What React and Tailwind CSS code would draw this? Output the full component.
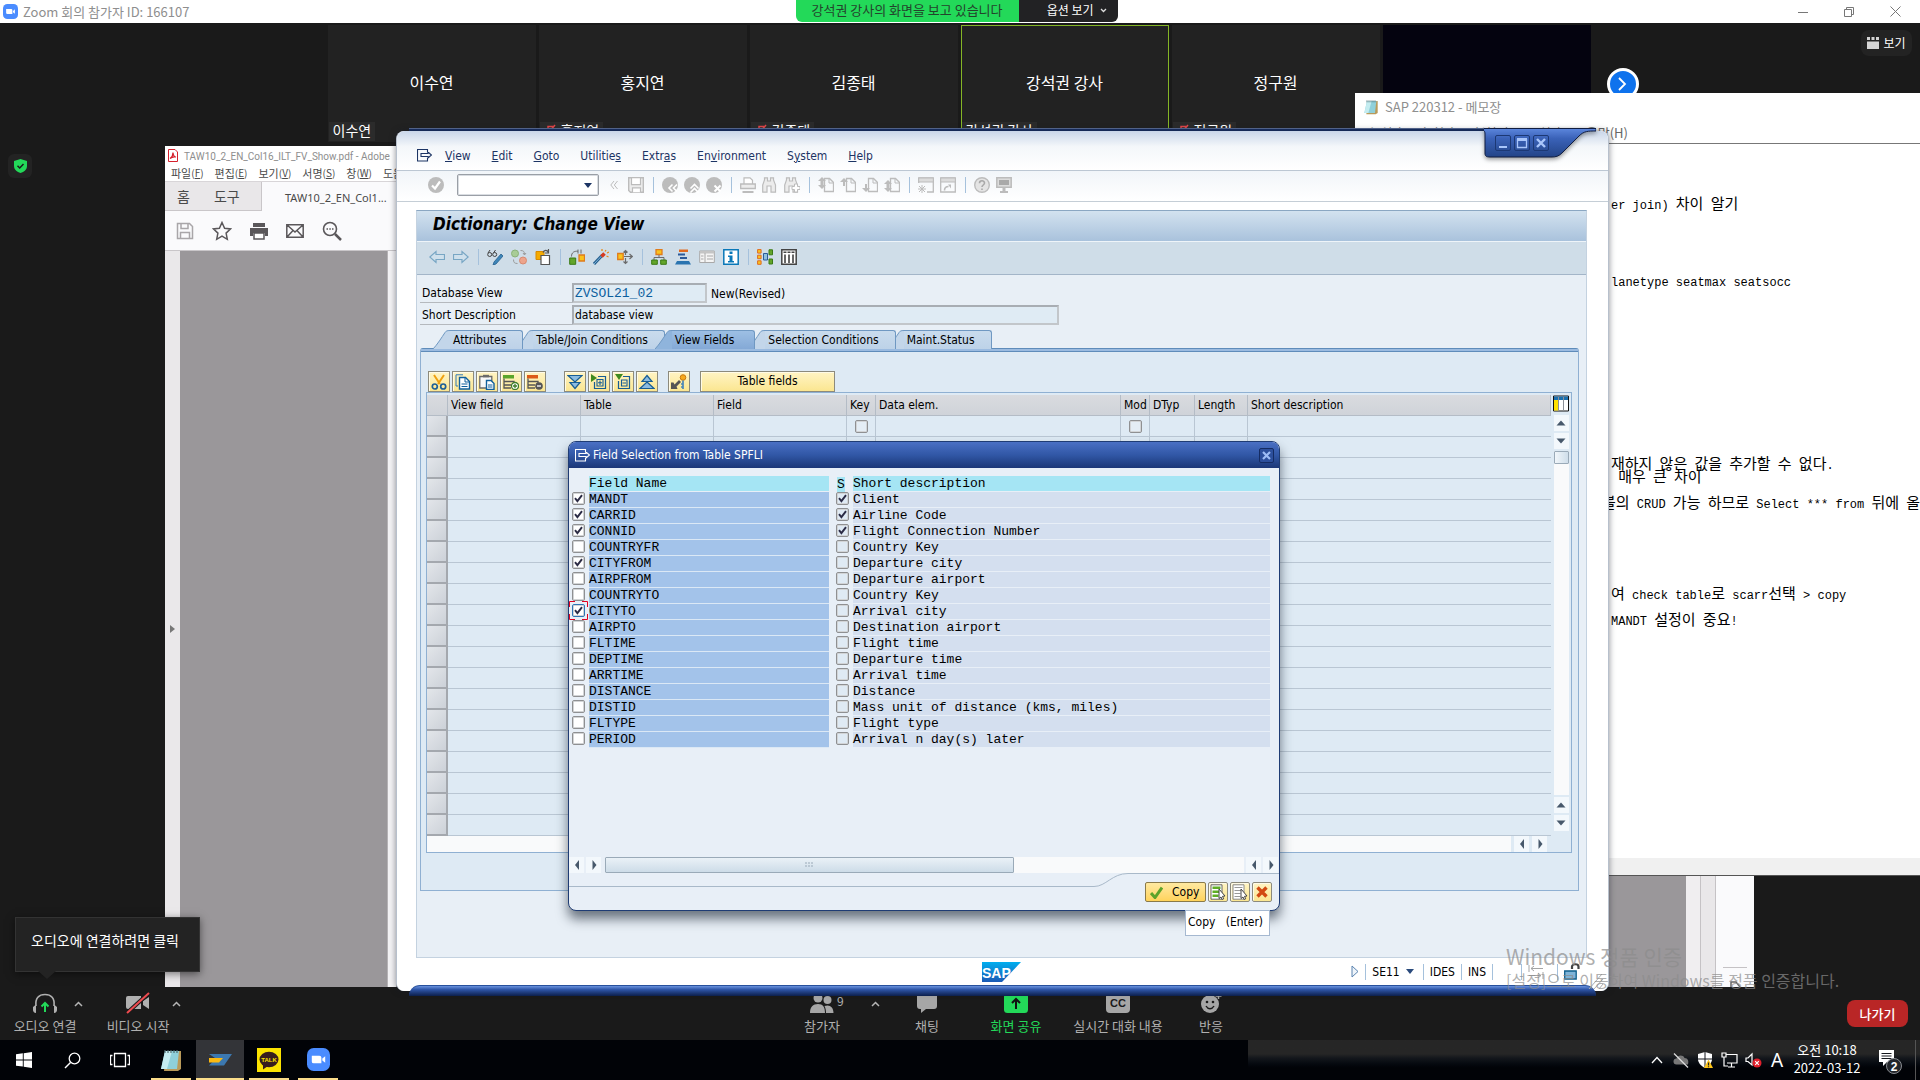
import React from 'react';

const KR = "font-['Noto_Sans_CJK_KR','Liberation_Sans',sans-serif]";
const SAPF = "font-['DejaVu_Sans_Condensed','Noto_Sans_CJK_KR',sans-serif]";
const MONO = "font-['Liberation_Mono','Noto_Sans_CJK_KR',monospace]";

/* ---------- shared pieces ---------- */

function Ic({ w = 16, h = 16, vb, children, className = '' }) {
  return (
    <svg width={w} height={h} viewBox={vb || `0 0 ${w} ${h}`} fill="none" className={`shrink-0 ${className}`} aria-hidden="true">
      {children}
    </svg>
  );
}

function Tick({ label, checked = false, tone = 'bg-white', focus = false }) {
  return (
    <span className="relative block size-[13px]">
      <input
        type="checkbox"
        aria-label={label}
        defaultChecked={checked}
        className={`peer block size-[13px] appearance-none rounded-[2px] border shadow-[inset_0_0_0_1px_#d2d4d6] ${focus ? 'border-[#2f74b5]' : 'border-[#8f9092]'} ${tone}`}
      />
      <svg width="13" height="13" viewBox="0 0 13 13" fill="none" className="pointer-events-none absolute inset-0 hidden peer-checked:block">
        <path d="M3 6.2l2.4 3L10 3.2" stroke="#2b2b45" strokeWidth="1.9" />
      </svg>
      {focus && (
        <svg width="19" height="19" viewBox="0 0 19 19" fill="none" className="pointer-events-none absolute -top-[3px] -left-[3px]">
          <path d="M.5 6V.5H6M13 .5h5.500V6M18.500 13v5.500H13M6 18.500H.5V13" stroke="#e00020" />
        </svg>
      )}
    </span>
  );
}

function Arrow({ dir, label, className = '' }) {
  const d = {
    up: 'M7 4.500l4.500 5h-9z',
    down: 'M7 9.500l4.500-5h-9z',
    left: 'M5 7l4-5v10z',
    right: 'M9.500 7l-4-5v10z',
  }[dir];
  return (
    <button aria-label={label} className={`flex h-4 w-[15px] shrink-0 items-center justify-center bg-[#f3f8fc] ${className}`}>
      <Ic w={14} h={14}><path d={d} fill="#47586b" /></Ic>
    </button>
  );
}

function Caret({ label }) {
  return (
    <button aria-label={label} className="flex h-4 w-3 items-center justify-center">
      <Ic w={9} h={6}><path d="M1 5l3.500-3.500L8 5" stroke="#b5b5b5" strokeWidth="1.500" /></Ic>
    </button>
  );
}

const CamIcon = ({ s }) => (
  <Ic w={s} h={s} vb="0 0 24 24">
    <rect width="24" height="24" rx="7" fill="#4a8cff" />
    <path d="M5 8h8a2 2 0 012 2v6H7a2 2 0 01-2-2zM16 11l3-2.500v7L16 13z" fill="#fff" />
  </Ic>
);

const NoteIcon = ({ s }) => (
  <Ic w={s} h={s} vb="0 0 24 24">
    <path d="M7 3h15v18l-3 2H5z" fill="#b99a5a" />
    <path d="M6 3h14l-2 18H2z" fill="#8fd0da" />
    <path d="M6 3h7L8 21H2z" fill="#c4ecf0" />
    <path d="M6 2v3M9 2v3M12 2v3M15 2v3M18 2v3" stroke="#4d6b70" strokeWidth="1.200" />
  </Ic>
);

/* ---------- meeting window ---------- */

const people = [
  { name: '이수연', mic: false },
  { name: '홍지연', mic: true },
  { name: '김종태', mic: true },
  { name: '강석권 강사', mic: false, active: true },
  { name: '정구원', mic: true },
];

function MeetingTitle() {
  return (
    <header className="grid h-[23px] shrink-0 grid-cols-[1fr_auto_1fr] bg-white">
      <div className="flex items-center gap-[5px] pl-[3px] text-[13px] text-[#8e8e8e]">
        <CamIcon s={15} />
        <span className="leading-5">Zoom 회의 참가자 ID: 166107</span>
      </div>
      <div className="mr-[7px] flex h-[22px] overflow-hidden rounded-b-md text-[13px]">
        <span className="flex w-[223px] items-center justify-center bg-[#23d959] pb-0.5 text-[#24432c]">강석권 강사의 화면을 보고 있습니다</span>
        <button className="flex w-[99px] items-center justify-end gap-1.5 bg-[#222224] pr-[11px] pb-0.5 text-[12px] text-white">
          옵션 보기
          <Ic w={7} h={5}><path d="M1 1l2.500 2.500L6 1" stroke="#ddd" strokeWidth="1.300" /></Ic>
        </button>
      </div>
      <div className="flex items-center justify-end pr-0.5">
        <button aria-label="최소화" className="flex h-5 w-[46px] items-center justify-center"><Ic w={10} h={10}><path d="M0 5.500h10" stroke="#777" /></Ic></button>
        <button aria-label="이전 크기로" className="flex h-5 w-[46px] items-center justify-center"><Ic w={10} h={10}><path d="M.5 2.500h7v7h-7zM2.500 2.500v-2h7v7h-2" stroke="#777" /></Ic></button>
        <button aria-label="닫기" className="flex h-5 w-[46px] items-center justify-center"><Ic w={11} h={11}><path d="M.5.5l10 10M10.500.5l-10 10" stroke="#777" /></Ic></button>
      </div>
    </header>
  );
}

function Gallery() {
  return (
    <div className="grid grid-cols-[1fr_auto_1fr] pt-0.5">
      <div className="pt-[129px] pl-2">
        <button aria-label="회의 정보" className="flex size-6 items-center justify-center rounded-md bg-[#232323]">
          <Ic w={13} h={14}>
            <path d="M6.500 0l6.500 2v5c0 3.500-3 6-6.500 7C3 13 0 10.500 0 7V2z" fill="#23d959" />
            <path d="M3.500 6.800l2.200 2.200 3.800-4" stroke="#1a1a1a" strokeWidth="1.500" />
          </Ic>
        </button>
      </div>
      <div className="mr-0.5 flex gap-[3px]">
        {people.map((p) => (
          <div key={p.name} className={`relative flex h-[117px] w-[208px] items-start justify-center border bg-[#222] pt-[44px] ${p.active ? 'border-[#84b526]' : 'border-[#222]'}`}>
            <span className="text-[16px] leading-6 text-white">{p.name}</span>
            <span className="absolute bottom-0 left-0 flex h-[19px] items-center gap-1 bg-[#2b2b2b] px-1 pb-0.5 text-[14px] leading-[17px] text-white">
              {p.mic && <Ic w={13} h={13}><path d="M4 2.500h4.500v5H4zM6.500 8v4M11 1L2 12" stroke="#e0464a" strokeWidth="1.500" /></Ic>}
              {p.name}
            </span>
          </div>
        ))}
        <div className="h-[117px] w-[208px] bg-[#04030f]" />
      </div>
      <div className="flex items-start justify-between">
        <button aria-label="다음" className="mt-[43px] ml-[14px] flex size-8 items-center justify-center rounded-full border-[3px] border-white bg-[#0e72ed]">
          <Ic w={9} h={14}><path d="M1 1l6 6-6 6" stroke="#fff" strokeWidth="1.800" /></Ic>
        </button>
        <button className="mt-[5px] mr-2 flex h-[26px] w-[51px] items-center justify-center gap-1 rounded-lg bg-[#232323] text-[12px] text-white">
          <Ic w={12} h={12}><path d="M0 0h3v3H0zM4.500 0h3v3h-3zM9 0h3v3H9zM0 4.500h12V12H0z" fill="#d5d5d5" /></Ic>
          <span className="leading-4">보기</span>
        </button>
      </div>
    </div>
  );
}

function Tool({ label, width, green, badge, children }) {
  return (
    <button className={`relative flex flex-col items-center gap-1 ${width} ${green ? 'text-[#23d959]' : 'text-[#b0b0b0]'}`}>
      <span className="flex h-[22px] items-center">{children}</span>
      {badge && <span className="absolute top-[3px] left-[49px] text-[12px] leading-3">{badge}</span>}
      <span className="text-[13px] leading-4">{label}</span>
    </button>
  );
}

function MeetingTools() {
  return (
    <footer className="flex h-[53px] shrink-0 items-start bg-[#1a1a1a] pt-[5px]">
      <div className="flex w-[206px] pl-3">
        <Tool label="오디오 연결" width="w-[66px]">
          <Ic w={24} h={20}>
            <path d="M3 13C2 5 6 1.500 12 1.500S22 5 21 13" stroke="#b0b0b0" strokeWidth="1.600" />
            <path d="M0 14l3-2.500V20C1 20 0 18 0 17zM24 14l-3-2.500V20c2 0 3-2 3-3z" fill="#b0b0b0" />
            <path d="M12 19v-8M8.500 13.500L12 10l3.500 3.500" stroke="#23d959" strokeWidth="2" />
          </Ic>
        </Tool>
        <div className="-ml-1.5 pt-1"><Caret label="오디오 옵션" /></div>
        <div className="ml-5">
          <Tool label="비디오 시작" width="w-[68px]">
            <Ic w={26} h={22}>
              <path d="M1 6a2 2 0 012-2h13v13H3a2 2 0 01-2-2zM18 9l6-4v12l-6-4z" fill="#b0b0b0" />
              <path d="M2 21L24 1" stroke="#1a1a1a" strokeWidth="4" />
              <path d="M2 21L24 1" stroke="#ee4b4f" strokeWidth="2" />
            </Ic>
          </Tool>
        </div>
        <div className="-ml-0.5 pt-1"><Caret label="비디오 옵션" /></div>
      </div>
      <div className="flex flex-1 justify-center">
        <Tool label="참가자" width="w-[68px]" badge="9">
          <Ic w={26} h={20}>
            <circle cx="9" cy="5" r="4.500" fill="#a6a6a6" />
            <circle cx="18.500" cy="7" r="4" fill="#a6a6a6" />
            <path d="M1 20c0-6 3-9 8-9s7 3 7 9zM17 20c0-3-.5-5-1.500-7 5-2 9 1 9 7z" fill="#a6a6a6" />
          </Ic>
        </Tool>
        <div className="flex w-[38px] justify-center pt-1"><Caret label="참가자 옵션" /></div>
        <Tool label="채팅" width="w-[66px]">
          <Ic w={20} h={20}><path d="M3 0h14a3 3 0 013 3v10a3 3 0 01-3 3H9l-5 4v-4H3a3 3 0 01-3-3V3a3 3 0 013-3z" fill="#a6a6a6" /></Ic>
        </Tool>
        <Tool label="화면 공유" width="w-[112px]" green>
          <Ic w={24} h={20}>
            <rect width="24" height="20" rx="3.500" fill="#23d959" />
            <path d="M12 16V6.500M8 10l4-4 4 4" stroke="#111" strokeWidth="2" />
          </Ic>
        </Tool>
        <Tool label="실시간 대화 내용" width="w-[92px]">
          <span className="flex h-5 w-6 items-center justify-center rounded-[4px] bg-[#a6a6a6] font-['Liberation_Sans',sans-serif] text-[11px] font-bold text-[#1a1a1a]">CC</span>
        </Tool>
        <Tool label="반응" width="w-[94px]">
          <Ic w={22} h={20}>
            <circle cx="10" cy="11" r="9" fill="#a6a6a6" />
            <circle cx="7" cy="9" r="1.300" fill="#1a1a1a" /><circle cx="13" cy="9" r="1.300" fill="#1a1a1a" />
            <path d="M6 13c2 3.500 6 3.500 8 0" stroke="#1a1a1a" strokeWidth="1.500" />
            <path d="M18.500 0v6M15.500 3h6" stroke="#a6a6a6" strokeWidth="1.500" />
          </Ic>
        </Tool>
      </div>
      <div className="flex w-20 justify-end pt-2 pr-3">
        <button className="h-[27px] w-[61px] rounded-lg bg-[#b92626] text-[13px] leading-[24px] font-medium text-white">나가기</button>
      </div>
    </footer>
  );
}

/* ---------- PDF reader ---------- */

function PdfWindow() {
  return (
    <section className="absolute top-[146px] right-[166px] bottom-[93px] left-[165px] flex flex-col bg-white text-[#4a4a4a]">
      <div className="flex h-[18px] shrink-0 items-center gap-1.5 pl-[3px] text-[#8e8e8e]">
        <Ic w={10} h={13}>
          <path d="M.5.5h6.500l2.500 2.500v9.500h-9z" fill="#fff" stroke="#d5202c" />
          <path d="M2 9.500c1.500-1 3-3 3-6 .3 3 1.500 4.500 3 4.500-2.500-.5-4.500.2-6 1.500z" stroke="#d5202c" strokeWidth="1.200" />
        </Ic>
        <span className="pt-0.5 font-['Roboto',sans-serif] text-[10px] whitespace-nowrap">TAW10_2_EN_Col16_ILT_FV_Show.pdf - Adobe</span>
      </div>
      <nav className="flex h-[17px] shrink-0 items-center gap-[11px] pl-1.5 text-[11px] leading-4 whitespace-nowrap">
        {[['파일', 'F'], ['편집', 'E'], ['보기', 'V'], ['서명', 'S'], ['창', 'W'], ['도움말', 'H']].map(([t, k]) => (
          <a key={k} href="#menu" className="flex items-center">{t}<span className="text-[10px]">(<u>{k}</u>)</span></a>
        ))}
      </nav>
      <div className="flex h-[30px] shrink-0 border-t border-[#d8d5d8] bg-[#fafafc] text-[14px]">
        <div className="flex w-[97px] items-center gap-6 border-r border-b border-[#c9c6c9] bg-[#e9e7e9] pl-3">
          <a href="#home" className="leading-4">홈</a>
          <a href="#tools" className="leading-4">도구</a>
        </div>
        <span className="pt-[8px] pl-[23px] font-['Noto_Sans',sans-serif] text-[11px] leading-4">TAW10_2_EN_Col1...</span>
      </div>
      <div className="flex h-[40px] shrink-0 items-center gap-[18px] border-b border-[#c9c6c9] bg-[#fafafc] pl-[11px]">
        <button aria-label="저장"><Ic w={18} h={18}><path d="M1.500 1.500h12l3 3v12h-15zM5 1.500v5h7v-5M4.500 16.500v-6h9v6" stroke="#a9a6a9" strokeWidth="1.500" /></Ic></button>
        <button aria-label="즐겨찾기"><Ic w={20} h={20}><path d="M10 1.500l2.600 5.700 6 .7-4.500 4.200 1.200 6.200L10 15.200l-5.300 3.100 1.200-6.200L1.400 7.900l6-.7z" stroke="#5a575a" strokeWidth="1.500" /></Ic></button>
        <button aria-label="인쇄"><Ic w={18} h={18}><path d="M3 1h12v4H3zM0 6h18v8h-3v-3H3v3H0z" fill="#5a575a" /><path d="M4 11h10v6H4z" fill="#fff" stroke="#5a575a" strokeWidth="1.500" /></Ic></button>
        <button aria-label="메일"><Ic w={18} h={14}><path d="M.8.8h16.400v12.400H.8zM.8.8L9 8l8.200-7.200M.8 13.200l6-6.500M17.200 13.200l-6-6.500" stroke="#5a575a" strokeWidth="1.500" /></Ic></button>
        <button aria-label="찾기"><Ic w={20} h={20}><circle cx="8" cy="8" r="6.500" stroke="#5a575a" strokeWidth="1.600" /><path d="M13 13l6 6" stroke="#5a575a" strokeWidth="2.500" /><path d="M4.500 8h1.500M7.300 8h1.500M10 8h1.500" stroke="#5a575a" strokeWidth="1.500" /></Ic></button>
      </div>
      <div className="flex flex-1">
        <div className="flex w-[15px] items-center justify-center bg-[#eae8ea] pt-5"><Ic w={5} h={8}><path d="M0 0l5 4-5 4z" fill="#777" /></Ic></div>
        <div className="w-[207px] bg-[#9a979a]" />
        <div className="w-[9px] border-l border-[#b5b2b5] bg-[#f4f3f5]" />
        <div className="flex-1 bg-[#9a979a]" />
        <div className="w-[15px] border-r border-[#c5c2c5] bg-[#f0eef0]" />
        <div className="w-[15px] border-r border-[#c5c2c5] bg-[#e9e7e9]" />
        <div className="flex w-[38px] flex-col items-center justify-end gap-3 bg-[#fafafc]">
          <span className="h-px w-6 bg-[#c5c2c5]" />
          <Ic w={14} h={7}><path d="M3 7V2h5l4 5" stroke="#666" strokeWidth="1.500" /></Ic>
        </div>
      </div>
    </section>
  );
}

/* ---------- Notepad ---------- */

const noteLines = [
  '', '', '', '', 'er join) 차이 알기', '', '', '', '', '', 'lanetype seatmax seatsocc',
  '', '', '', '', '', '', '', '', '', '', '', '', '',
  '재하지 않은 값을 추가할 수 없다.', ' 매우 큰 차이', '', '>의 CRUD 가능 하므로 Select *** from 뒤에 올', '', '', '', '', '', '',
  '여 check table로 scarr선택 > copy', '', 'MANDT 설정이 중요!',
];

function NoteLine({ text }) {
  const cut = text.startsWith('>');
  const body = cut ? '블' + text.slice(1) : text;
  return (
    <p className={`h-[13px] leading-[13px] whitespace-pre ${cut ? 'pl-[247px]' : 'pl-64'}`}>
      {body.split(/([가-힣]+)/).map((s, i) => (/[가-힣]/.test(s) ? <span key={i} className="text-[15px]">{s}</span> : s))}
    </p>
  );
}

function Notepad() {
  return (
    <section className="absolute top-[93px] right-0 bottom-[204px] left-[1355px] flex flex-col overflow-hidden border-b border-[#555] bg-white">
      <div className="flex h-[28px] shrink-0 items-center gap-1.5 pl-2 text-[13px] text-[#8e8e8e]">
        <NoteIcon s={16} />
        <span className="leading-4">SAP 220312 - 메모장</span>
      </div>
      <nav className="flex h-[23px] shrink-0 items-center gap-3 border-b border-[#777] pt-0.5 pl-2 text-[13px] leading-4 text-[#666]">
        <a href="#file">파일(F)</a><a href="#edit">편집(E)</a><a href="#format">서식(O)</a><a href="#view">보기(V)</a><a href="#help">도움말(H)</a>
      </nav>
      <div className={`flex-1 overflow-hidden pt-[3px] text-[12px] text-black ${MONO}`}>
        {noteLines.map((t, i) => <NoteLine key={i} text={t} />)}
      </div>
      <div className="h-[17px] shrink-0 bg-[#f0f0f0]" />
    </section>
  );
}

/* ---------- SAP window ---------- */

const G = '#bcbcbc';
const Sep = ({ className = 'w-[17px]' }) => (
  <span className={`flex shrink-0 justify-center ${className}`}><span className="h-4 w-px bg-[#a5c1dc]" /></span>
);

const page = (extra) => (
  <>
    <path d="M6.500 1.500h5l4 4v9h-9z" stroke={G} strokeWidth="1.300" /><path d="M11 1.500v4.500h4.500" stroke={G} />
    <path d={extra} fill={G} />
  </>
);
const bino = <path d="M2.500 3V.8h3V4h3V.8h3V3L13.500 8v7.200H9V9H5v6.200H.7V8z" fill="#ececec" stroke={G} strokeWidth="1.200" />;

const sysIcons = [
  ['Save', <><path d="M.7.7h14.600v14.600H2.500L.7 13.500z" fill="#ececec" stroke={G} strokeWidth="1.400" /><path d="M3.500.7h9v7h-9zM4.500 15.300v-4.500h8v4.500" fill="#fff" stroke={G} strokeWidth="1.200" /></>],
  null,
  ['Back', <><circle cx="8" cy="8" r="8" fill={G} /><path d="M10.500 7.500L7 11l3.500 3.500M15 7.500L11.500 11l3.500 3.500" stroke="#fff" strokeWidth="1.600" /></>],
  ['Exit', <><circle cx="8" cy="8" r="8" fill={G} /><path d="M6.500 11.500L10.500 7.500l4 4M6.500 15.500l4-4 4 4" stroke="#fff" strokeWidth="1.600" /></>],
  ['Cancel', <><circle cx="8" cy="8" r="8" fill={G} /><path d="M8.500 8.500l6 6M14.500 8.500l-6 6" stroke="#fff" strokeWidth="2" /></>],
  null,
  ['Print', <><path d="M4 7V.8h6l2.500 2.500V7" fill="#fff" stroke={G} strokeWidth="1.200" /><path d="M.7 7h14.600v4.500H.7z" fill="#ececec" stroke={G} strokeWidth="1.300" /><path d="M2.500 14h11v2h-11z" fill={G} /></>],
  ['Find', bino],
  ['Find next', <>{bino}<path d="M10.500 7h3v2.500H16v3h-2.500V15h-3v-2.500H8v-3h2.500z" fill="#fff" stroke={G} /></>],
  null,
  ['First page', page('M4 0l4 4H5.500v4H8l-4 4-4-4h2.500V4H0z')],
  ['Previous page', page('M4 1l4 4H5v4H3V5H0z')],
  ['Next page', page('M4 15l-4-4h3V7h2v4h3z')],
  ['Last page', page('M4 3l4 4H5.500v4H8l-4 4-4-4h2.500V7H0z')],
  null,
  ['New session', <><path d="M.7 6V1h14.600v14H9" stroke={G} strokeWidth="1.300" /><path d="M.7 1h14.600v4H.7z" fill="#dcdcdc" stroke={G} /><path d="M4 8v8M0 12h8M1 9l6 6M7 9l-6 6" stroke={G} /></>],
  ['Shortcut', <><path d="M.7 1h14.600v14H.7z" stroke={G} strokeWidth="1.300" /><path d="M.7 1h14.600v4H.7z" fill="#dcdcdc" stroke={G} /><path d="M4.500 13.500c0-3 1.500-4 4-4" stroke={G} strokeWidth="1.600" /><path d="M8 7.500h3v4z" fill={G} /></>],
  null,
  ['Help', <><circle cx="8" cy="8" r="7.300" fill="#e4e4e4" stroke={G} strokeWidth="1.400" /><path d="M5.500 6.200C5.500 3 10.500 3 10.500 6c0 2-2.500 2-2.500 4M8 11.500v1.500" stroke="#a9a9a9" strokeWidth="1.600" /></>],
  ['Layout', <><path d="M.8.8h14.400v9.400H.8z" fill="#dcdcdc" stroke={G} strokeWidth="1.500" /><path d="M3 3h10v5H3z" fill="#a9a9a9" /><path d="M6.500 10.500h3V14h2.500v2H4v-2h2.500z" fill={G} /></>],
];

const GR = '#6b6b6b';
const appIcons = [
  ['Back', <path d="M7 2.500v3h8.500v5H7v3L.8 8z" fill="#cfe0ec" stroke="#78a6c4" strokeWidth="1.200" />],
  ['Forward', <path d="M9 2.500v3H.5v5H9v3L15.200 8z" fill="#cfe0ec" stroke="#78a6c4" strokeWidth="1.200" />],
  null,
  ['Display / Change', <><circle cx="2.700" cy="5.500" r="2" stroke="#444" /><circle cx="7.700" cy="5.500" r="2" stroke="#444" /><path d="M1 4l2-3M6.500 4l2-3" stroke="#444" /><path d="M14 5l2 2-7 8-3 1 1-3z" fill="#3f86b8" stroke="#27618f" strokeWidth=".8" /></>],
  ['Active / Inactive', <><circle cx="4" cy="4.500" r="3.500" fill="#a8cc96" stroke="#8ab278" /><circle cx="12" cy="11.500" r="3.500" fill="#eda48c" stroke="#d88a70" /><path d="M9.500 1.500c3 0 4 1 4 4M12 4l1.500 2L15 4M6.500 14.500c-3 0-4-1-4-4" stroke="#9a9a9a" /></>],
  ['Other object', <><path d="M1 2.500h8v8H1z" fill="#f5ab00" stroke="#d98a00" /><path d="M6 6.500h8.500v9H6z" fill="#fff" stroke="#555" strokeWidth="1.200" /><path d="M8 3.500C9 .8 12 .5 13.500 3.500M13.500 0v4H10" stroke="#555" strokeWidth="1.200" /></>],
  null,
  ['Check', <><path d="M.7 9h6v6.300h-6z" fill="#63a52b" stroke="#3b7a15" /><path d="M10 6h5.500v6H10z" fill="#f9c31d" stroke="#e07c1c" strokeWidth="1.300" /><path d="M2.500 7.500C2.500 3.500 5 2 9 2.200M9 .5v4M12 4.500V.5" stroke={GR} /></>],
  ['Activate', <><path d="M1 15L9.500 6" stroke="#27618f" strokeWidth="3" /><path d="M1 15L9.500 6" stroke="#7fb4dc" strokeWidth="1" /><path d="M8.500 7.500l3-3" stroke="#d63a20" strokeWidth="3.500" /><path d="M9 2V0M13 1l-1 1.500M14 4l2-1M13.500 7l2 1" stroke="#e88a1a" strokeWidth="1.300" /></>],
  ['Where-used', <><path d="M.7 4.500h5.500v6H.7z" fill="#f9c31d" stroke="#e07c1c" strokeWidth="1.300" /><path d="M7 7.500h8M12.500 5l2.800 2.500-2.800 2.500M8.500 6V1.500M6.500 3.500l2-2 2 2M8.500 9v5.500M6.500 12.500l2 2 2-2" stroke={GR} strokeWidth="1.200" /></>],
  null,
  ['Hierarchy', <><path d="M5 .7h6v4.800H5z" fill="#f9c31d" stroke="#e07c1c" strokeWidth="1.300" /><path d="M8 6v3M3 11V8.500h10V11" stroke={GR} /><path d="M.7 11h5.600v4.300H.7zM9.700 11h5.600v4.300H9.700z" fill="#63a52b" stroke="#3b7a15" /></>],
  ['Object list', <><path d="M4 .5h9v2.500H4z" fill="#e06a20" /><path d="M3 4.500h7v2H3zM5 8h7v2H5z" fill="#2b5a9a" /><path d="M2 12h12l2 3.500H0z" fill="#2a74b0" /></>],
  ['Contents', <><path d="M.7 2h14.600v11.500H.7z" fill="#f4f4f4" stroke="#a8a8a8" /><path d="M.7 2h14.600v2.500H.7z" fill="#c4c4c4" /><path d="M6 4v9M2 7h2.500M2 10h2.500M8 7h6M8 10h6" stroke="#a8a8a8" /></>],
  ['Information', <><path d="M.8.8h14.400v14.400H.8z" fill="#fff" stroke="#0a78b8" strokeWidth="1.500" /><path d="M6.500 2.500h3V5h-3zM5 6.500h4.500V12H11v1.500H5V12h1.500V8H5z" fill="#0a78b8" /></>],
  null,
  ['Relationships', <><path d="M.6.6h3.500v3.500H.6zM.6 6.200h3.500v3.500H.6zM.6 11.800h3.500v3.500H.6z" fill="#f9c31d" stroke="#e06a20" /><path d="M6.500 4.500h4v6.500h-4z" fill="#8fc0e0" stroke="#2b5a9a" /><path d="M12 .8h3.500v5H12zM12 10h3.500v5H12z" fill="#63a52b" stroke="#3b7a15" /></>],
  ['Columns', <><path d="M.8.8h14.400v14.400H.8z" fill="#fff" stroke="#444" strokeWidth="1.500" /><path d="M2.500 2.500h3v1.500h-3zM6.500 2.500h3v1.500h-3zM10.500 2.500h3v1.500h-3z" fill="#444" /><path d="M3 5.500h2V14H3zM7 5.500h2V14H7zM11 5.500h2V14h-2z" fill="#666" /></>],
];

const docs = <path d="M1 .8h7M1 .8V12h2" stroke="#2f78b8" />;
const gridIcons = [
  ['Cut', <><path d="M3 1l6 9M13 1L7 10" stroke="#eea010" strokeWidth="2" /><circle cx="3.800" cy="12.500" r="2.500" stroke="#1d5f96" strokeWidth="1.700" /><circle cx="12.200" cy="12.500" r="2.500" stroke="#1d5f96" strokeWidth="1.700" /></>],
  ['Copy', <>{docs}<path d="M4.500 3.500h6l4 4v7.500h-10z" fill="#fff" stroke="#0f5f9c" strokeWidth="1.400" /><path d="M10 3.500V8h4.500M6.500 10h6M6.500 12.500h6" stroke="#0f5f9c" /></>],
  ['Paste', <><path d="M.8 2.500h12V14H.8z" fill="#f8f8f8" stroke="#6a6a6a" strokeWidth="1.300" /><path d="M4 .8h6v2.500H4z" fill="#6a6a6a" /><path d="M7.500 6.500h4.500l3 3v6H7.500z" fill="#fff" stroke="#0f5f9c" strokeWidth="1.400" /><path d="M9 11h4.500M9 13h4.500" stroke="#0f5f9c" /></>],
  ['Insert row', <><path d="M0 1h11v3.500H0z" fill="#5ba52b" /><path d="M1 4.500V14h7M1 7.500h10V10M1 11h7" stroke="#555" strokeWidth="1.300" /><circle cx="12" cy="12" r="3.500" fill="#fff" stroke="#3f7d2a" strokeWidth="1.300" /><path d="M12 10v4M10 12h4" stroke="#3f7d2a" strokeWidth="1.300" /></>],
  ['Delete row', <><path d="M0 1h11v3.500H0z" fill="#dc5a18" /><path d="M1 4.500V14h7M1 7.500h10V10M1 11h7" stroke="#555" strokeWidth="1.300" /><circle cx="12" cy="12" r="3.800" fill="#555" /><path d="M10 12h4" stroke="#fff" strokeWidth="1.300" /></>],
  'w-4',
  ['Sort down', <path d="M1 1.500h14L8 8zM3 8.500h10L8 14.500z" fill="#8cbce0" stroke="#175d94" strokeWidth="1.200" />],
  ['Expand', <><path d="M0 0l6 4-6 4z" fill="#3f8a1f" /><path d="M7 2.500h7.500v12h-11V8" stroke="#175d94" strokeWidth="1.200" /><path d="M6 5.500h6v6.500H6zM9 6.500v4.500M7 8.700h4" stroke="#175d94" strokeWidth="1.100" /></>],
  ['Collapse', <><path d="M0 0h8L4 6z" fill="#3f8a1f" /><path d="M8 2.500h6.500v12h-11V7" stroke="#175d94" strokeWidth="1.200" /><path d="M6.500 6h5.500v6H6.500zM7.500 9h3.500" stroke="#175d94" strokeWidth="1.100" /></>],
  ['Sort up', <path d="M8 1.500l5 6H3zM8 8l7 6.500H1z" fill="#8cbce0" stroke="#175d94" strokeWidth="1.200" />],
  'w-2',
  ['Key', <><path d="M0 15V8.500h2.500l1 2L8 6l2 2-4.500 4.500 1 2.500z" fill="#555" /><circle cx="12" cy="3.500" r="2.800" fill="#f5a81c" stroke="#c8780c" /><path d="M12 6.500V15M12 10h-2M12 13h-2" stroke="#4a86b8" strokeWidth="1.700" /></>],
];

const YB = 'border border-[#8c8a7c] bg-linear-to-b from-[#fff4c4] to-[#fbe690] shadow-[inset_1px_1px_0_#fffbe6]';

function IconRow({ icons, cell, sep }) {
  return icons.map((it, i) =>
    it ? (
      <button key={i} aria-label={it[0]} title={it[0]} className={`flex h-5 shrink-0 items-center justify-center ${cell}`}>
        <Ic>{it[1]}</Ic>
      </button>
    ) : <Sep key={i} className={sep} />
  );
}

const menus = [
  ['', 'V', 'iew'], ['', 'E', 'dit'], ['', 'G', 'oto'], ['Utilitie', 's', ''], ['Extr', 'a', 's'],
  ['En', 'v', 'ironment'], ['S', 'y', 'stem'], ['', 'H', 'elp'],
];

function MenuDoor({ stroke }) {
  return <Ic w={15} h={13}><path d="M10.500 3.500v-3H.5v11.500h10V9M4 4.500h7V3l3.500 3-3.500 3V7.500H4z" stroke={stroke} strokeWidth="1.100" /></Ic>;
}

const tabs = [
  ['Attributes', 'z-30', '', 'pr-4'],
  ['Table/Join Conditions', 'z-20', '-ml-[7px]', 'pr-4'],
  ['View Fields', 'z-40', '-ml-[10px]', 'pr-5'],
  ['Selection Conditions', 'z-20', '-ml-[7px]', 'pr-4'],
  ['Maint.Status', 'z-10', '-ml-[9px]', 'pr-4'],
];

function Tab({ name, z, ml, pr }) {
  const active = name === 'View Fields';
  return (
    <button role="tab" aria-selected={active} className={`relative flex h-[19px] ${z} ${ml}`}>
      <Ic w={17} h={19}>
        <path d="M0 19C4 15 9 7 12 2.500 13 1 14 .5 17 .5V19z" fill={active ? '#8fb4dc' : '#c3d6ea'} />
        <path d="M0 19C4 15 9 7 12 2.500 13 1 14 .5 17 .5" stroke="#6f98c2" />
      </Ic>
      <span className={`h-[19px] rounded-tr-[3px] border-t border-r border-[#6f98c2] pl-[3px] leading-[19px] ${pr} ${active ? 'bg-linear-to-b from-[#9dbfe4] to-[#84a9d6]' : 'bg-linear-to-b from-[#c9dbed] to-[#bdd2e8]'}`}>{name}</span>
    </button>
  );
}

const cols = [
  ['', 'w-[21px]'], ['View field', 'w-[133px]'], ['Table', 'w-[133px]'], ['Field', 'w-[133px]'], ['Key', 'w-[29px]'],
  ['Data elem.', 'w-[245px]'], ['Mod', 'w-[29px]'], ['DTyp', 'w-[45px]'], ['Length', 'w-[53px]'], ['Short description', ''],
];

function FieldsGrid() {
  return (
    <div className="mr-1.5 mb-[37px] ml-[5px] flex flex-1 border border-[#8fb0d2] pt-0.5">
      <div className="flex flex-1 flex-col">
        <table className="w-full table-fixed border-separate border-spacing-0 text-left">
          <thead>
            <tr>
              {cols.map(([c, w], i) => (
                <th key={i} className={`h-[21px] border-r border-b border-[#b4bcc6] bg-linear-to-b from-[#d9dbdf] to-[#cfd3d9] py-0 pr-0 pl-[3px] font-normal whitespace-nowrap ${w}`}>{c}</th>
              ))}
            </tr>
          </thead>
          <tbody>
            {Array.from({ length: 20 }, (_, r) => (
              <tr key={r}>
                {cols.map(([c], i) => (
                  <td key={i} className={i === 0
                    ? 'h-[21px] border-r-2 border-b-2 border-[#a4a8ae] bg-linear-to-br from-[#e3e6ea] to-[#ccd1d8] p-0'
                    : `h-[21px] border-b border-[#b9c6d3] p-0 ${i < 9 ? 'border-r' : ''}`}>
                    {(c === 'Key' || c === 'Mod') && <span className="flex justify-center"><Tick label={`${c} ${r + 1}`} tone="bg-[#e4edf5]" /></span>}
                  </td>
                ))}
              </tr>
            ))}
          </tbody>
        </table>
        <div className="flex h-4 gap-[3px] pr-1">
          <div className="flex-1 bg-[#f9fafb]" />
          <Arrow dir="left" label="Scroll left" />
          <Arrow dir="right" label="Scroll right" />
        </div>
      </div>
      <div className="flex w-5 flex-col items-center gap-0.5 pb-[21px]">
        <button aria-label="Table settings" className="mb-px">
          <Ic w={16} h={17} vb="0 0 16 17">
            <path d="M.5 1h15v15H.5z" fill="#fff" stroke="#111" />
            <path d="M1 1.500h14V5H1z" fill="#1a6fae" /><path d="M1 5h4.500v10.500H1z" fill="#ffe100" /><path d="M5.500 2v13.500M10.500 2v13.500" stroke="#8a9098" />
          </Ic>
        </button>
        <Arrow dir="up" label="Scroll up" />
        <Arrow dir="down" label="Scroll down" />
        <div className="flex w-[15px] flex-1 bg-[#f9fafb]"><div className="h-[13px] w-full rounded-[1px] border border-[#9aaab8] bg-linear-to-r from-[#f1f6fa] to-[#cfdeea]" /></div>
        <Arrow dir="up" label="Row up" />
        <Arrow dir="down" label="Row down" />
      </div>
    </div>
  );
}

const fields = [
  ['MANDT', 'Client', 1, 1], ['CARRID', 'Airline Code', 1, 1], ['CONNID', 'Flight Connection Number', 1, 1],
  ['COUNTRYFR', 'Country Key', 0, 0], ['CITYFROM', 'Departure city', 1, 0], ['AIRPFROM', 'Departure airport', 0, 0],
  ['COUNTRYTO', 'Country Key', 0, 0], ['CITYTO', 'Arrival city', 1, 0], ['AIRPTO', 'Destination airport', 0, 0],
  ['FLTIME', 'Flight time', 0, 0], ['DEPTIME', 'Departure time', 0, 0], ['ARRTIME', 'Arrival time', 0, 0],
  ['DISTANCE', 'Distance', 0, 0], ['DISTID', 'Mass unit of distance (kms, miles)', 0, 0],
  ['FLTYPE', 'Flight type', 0, 0], ['PERIOD', 'Arrival n day(s) later', 0, 0],
];

function Dialog() {
  return (
    <section role="dialog" aria-label="Field Selection from Table SPFLI" className="absolute top-[313px] right-[329px] bottom-[85px] left-[172px] z-50 flex flex-col overflow-hidden rounded-lg border border-[#1f3c74] bg-[#e8eff7] shadow-[0_8px_12px_rgba(40,50,65,0.65)]">
      <div className="flex h-[26px] shrink-0 items-center gap-[3px] bg-linear-to-b from-[#4a70c4] via-[#3157a6] to-[#1b3777] pr-[5px] pl-1.5 text-white">
        <MenuDoor stroke="#fff" />
        <h2 className="flex-1 leading-4">Field Selection from Table SPFLI</h2>
        <button aria-label="Close" className="flex size-[15px] items-center justify-center rounded-[2px] border border-[#152c63] bg-[#2c4f9c]">
          <Ic w={9} h={9}><path d="M1 1l7 7M8 1L1 8" stroke="#9dbcf5" strokeWidth="2.200" /></Ic>
        </button>
      </div>
      <div className="min-h-0 flex-1 pt-2 pr-[9px]">
        <table className={`w-full table-fixed border-separate border-spacing-0 text-left text-[13px] leading-[15px] text-black ${MONO}`}>
          <thead>
            <tr>
              <th className="h-4 w-5 p-0" />
              <th className="h-4 w-60 border-b border-[#e8eff7] bg-[#a5e5f4] p-0 font-normal">Field Name</th>
              <th className="h-4 w-6 p-0 pl-2 font-normal"><span className="block h-[15px] w-2 bg-[#a5e5f4]">S</span></th>
              <th className="h-4 border-b border-[#e8eff7] bg-[#a5e5f4] p-0 font-normal">Short description</th>
            </tr>
          </thead>
          <tbody>
            {fields.map(([f, d, a, b]) => (
              <tr key={f}>
                <td className="h-4 p-0 pl-[3px] align-top"><Tick label={f} checked={!!a} focus={f === 'CITYTO'} /></td>
                <td className="h-4 border-b border-[#dbe8f5] bg-[#a3c3ea] p-0">{f}</td>
                <td className="h-4 p-0 pl-[7px] align-top"><Tick label={`${f} selected`} checked={!!b} tone="bg-[#dfeaf4]" /></td>
                <td className="h-4 border-b border-[#e8eff7] bg-[#d4dfef] p-0">{d}</td>
              </tr>
            ))}
          </tbody>
        </table>
      </div>
      <div className="flex h-4 shrink-0 gap-0.5 pr-px">
        <Arrow dir="left" label="Scroll left" />
        <Arrow dir="right" label="Scroll right" />
        <div className="ml-0.5 flex flex-1 bg-[#f9fafb]">
          <div className="flex w-[64%] items-center justify-center rounded-[1px] border border-[#9aaab8] bg-linear-to-b from-[#eaf1f7] to-[#cddce8]">
            <Ic w={8} h={6}><path d="M0 1h2M3 1h2M6 1h2M0 4h2M3 4h2M6 4h2" stroke="#9aaab8" /></Ic>
          </div>
        </div>
        <Arrow dir="left" label="Page left" />
        <Arrow dir="right" label="Page right" />
      </div>
      <div className="flex h-[37px] shrink-0">
        <div className="h-[14px] flex-1 border-b border-[#a9b9c9]" />
        <Ic w={34} h={14}><path d="M0 13.500C12 13.500 18 .5 34 .5" stroke="#a9b9c9" /></Ic>
        <div className="flex w-[151px] items-center justify-end gap-0.5 border-t border-[#a9b9c9] pr-[7px]">
          <button className="flex h-5 w-[61px] items-center gap-[9px] rounded-[2px] border border-[#8a7a4a] bg-linear-to-b from-[#ffe9a0] to-[#ffd35a] pl-1">
            <Ic w={13} h={13}><path d="M1 7l4 4.500L12 1.500" stroke="#5da32a" strokeWidth="3" /></Ic>Copy
          </button>
          <button aria-label="Select all" className={`flex h-5 w-5 items-center justify-center rounded-[2px] ${YB}`}>
            <Ic><path d="M1 .8h11v14.400H1z" fill="#fff" stroke="#666" /><path d="M2.500 2.500h8v2.500h-8zM2.500 6.500h8v2.500h-8zM2.500 10.500h6v2.500h-6z" fill="#5fae24" /><path d="M9 5l6 7-2.500.3 1.200 2.500-1.500.7-1.200-2.500-2 1.500z" fill="#fff" stroke="#444" /></Ic>
          </button>
          <button aria-label="Deselect all" className={`flex h-5 w-5 items-center justify-center rounded-[2px] ${YB}`}>
            <Ic><path d="M1 .8h11v14.400H1z" fill="#fff" stroke="#888" /><path d="M2.500 3.500h8M2.500 6.500h8M2.500 9.500h6M2.500 12.500h6" stroke="#999" /><path d="M9 5l6 7-2.500.3 1.200 2.500-1.500.7-1.200-2.500-2 1.500z" fill="#fff" stroke="#444" /></Ic>
          </button>
          <button aria-label="Cancel" className={`flex h-5 w-5 items-center justify-center rounded-[2px] ${YB}`}>
            <Ic w={12} h={12}><path d="M1.500 1.500l9 9M10.500 1.500l-9 9" stroke="#d24a12" strokeWidth="3.400" /></Ic>
          </button>
        </div>
      </div>
    </section>
  );
}

function SapWindow() {
  return (
    <section className={`absolute top-[128px] right-[311px] bottom-[84px] left-[396px] flex pt-[3px] pb-[5px] text-[12px] text-black ${SAPF}`}>
      <div className="absolute inset-x-[13px] top-0 h-1 border-t border-[#5a6d95] bg-[#172f66]" />
      <div className="relative flex flex-1 flex-col rounded-lg border-x border-[#b7c0cc] bg-white shadow-[0_0_6px_rgba(20,25,40,0.5)]">
        <nav className="flex h-10 shrink-0 items-center rounded-t-lg border-b border-[#bcc7d3] bg-linear-to-b from-[#c9d6e9] via-[#f4f7fa] via-40% to-white pt-2.5 pl-5 text-[#1c3464]">
          <MenuDoor stroke="#1c3464" />
          <div className="ml-[13px] flex gap-[21px] leading-4">
            {menus.map(([a, u, b]) => <a key={a + u + b} href="#menu">{a}<u>{u}</u>{b}</a>)}
          </div>
        </nav>
        <div className="flex h-[31px] shrink-0 items-center border-b border-[#c5ced6] bg-linear-to-b from-[#f1f5f9] to-white pb-0.5 pl-[31px]">
          <button aria-label="Enter"><Ic><circle cx="8" cy="8" r="8" fill={G} /><path d="M4 8.500l3 3 5-7" stroke="#fff" strokeWidth="2.200" /></Ic></button>
          <label className="ml-[13px] flex h-[22px] w-[142px] items-center rounded-[2px] border border-[#9a9fa6] bg-white pr-1.5 shadow-[inset_0_0_0_1px_#d9dde2]">
            <input aria-label="Command field" className="ml-1 h-4 min-w-0 flex-1 outline-none" />
            <Ic w={8} h={5}><path d="M0 0h8L4 5z" fill="#1c3464" /></Ic>
          </label>
          <span className="ml-[11px] flex w-[7px]"><Ic w={8} h={8}><path d="M4 0L.8 4 4 8M7.500 0L4.300 4l3.200 4" stroke={G} /></Ic></span>
          <span className="w-2" />
          <IconRow icons={sysIcons} cell="w-[22px]" sep="w-[12px]" />
        </div>
        <main className="mr-[21px] ml-[19px] mt-2 flex flex-1 flex-col border border-[#c4d2e0] border-t-[#8ba7c2] bg-[#e8eff6]">
          <h1 className="flex h-[31px] shrink-0 items-center border-b border-[#eef4f9] bg-linear-to-b from-[#d3e2ef] to-[#a9c2dc] pb-0.5 pl-4 text-[17px] font-bold italic">Dictionary: Change View</h1>
          <div className="flex h-[33px] shrink-0 items-center border-b border-[#a3b5c8] bg-[#cfdde8] pb-0.5 pl-2">
            <IconRow icons={appIcons} cell="w-6" sep="w-[10px]" />
          </div>
          <div className="pt-2 pl-[3px]">
            <div className="flex h-[22px]">
              <label htmlFor="dbview" className="h-5 w-[152px] border-b border-[#b5b9be] pl-0.5 leading-5">Database View</label>
              <input id="dbview" readOnly defaultValue="ZVSOL21_02" className={`h-5 w-[135px] border-2 border-[#a8adb3] border-r-[#c2c6ca] border-b-[#c2c6ca] bg-[#dfebf4] px-px text-[13px] text-[#0c5f9e] ${MONO}`} />
              <span className="ml-1 leading-[22px]">New(Revised)</span>
            </div>
            <div className="flex h-[23px]">
              <label htmlFor="shortdesc" className="h-5 w-[152px] border-b border-[#b5b9be] pl-0.5 leading-[21px]">Short Description</label>
              <input id="shortdesc" readOnly defaultValue="database view" className="h-5 w-[487px] border-2 border-[#a8adb3] border-r-[#c2c6ca] border-b-[#c2c6ca] bg-[#dfebf4] px-px" />
            </div>
          </div>
          <div role="tablist" className="mt-0.5 ml-4 flex h-[18px] shrink-0">
            {tabs.map(([n, z, ml, pr]) => <Tab key={n} name={n} z={z} ml={ml} pr={pr} />)}
          </div>
          <div className="mr-[7px] mb-[66px] ml-[3px] flex flex-1 flex-col rounded-t-[3px] border border-[#8fb0d2] border-t-[#5f8cba] bg-[#deeaf4]">
            <div className="h-[3px] shrink-0 border-b border-[#5f8cba] bg-[#9bbbe0]" />
            <div className="flex h-10 shrink-0 items-end pl-[7px]">
              {gridIcons.map((it, i) => typeof it !== 'string' ? (
                <button key={i} aria-label={it[0]} title={it[0]} className={`mr-0.5 flex h-[21px] w-[22px] items-center justify-center ${YB}`}><Ic>{it[1]}</Ic></button>
              ) : <span key={i} className={it} />)}
              <button className={`ml-2 h-[21px] w-[135px] leading-[19px] ${YB}`}>Table fields</button>
            </div>
            <FieldsGrid />
          </div>
        </main>
        <footer className="flex h-[33px] shrink-0 items-center rounded-b-lg bg-white pr-7 pb-1.5">
          <div className="flex flex-1 justify-end pr-[330px]">
            <Ic w={39} h={20}>
              <defs><linearGradient id="sapg" x1="0" y1="0" x2="0" y2="1"><stop offset="0" stopColor="#00aeef" /><stop offset="1" stopColor="#1b5ab5" /></linearGradient></defs>
              <path d="M0 0h39L20 20H0z" fill="url(#sapg)" />
              <text x="0" y="15.500" fontFamily="Liberation Sans" fontWeight="bold" fontSize="14" fill="#fff">SAP</text>
            </Ic>
          </div>
          <div className="flex items-center">
            <button aria-label="Expand status"><Ic w={8} h={13}><path d="M1 1l6 5.500L1 12z" fill="#eef4fa" stroke="#5a83b0" /></Ic></button>
            <Sep className="w-[13px]" />
            <span>SE11</span><Ic w={8} h={5} className="ml-1.5"><path d="M0 0h8L4 5z" fill="#2a4a7c" /></Ic>
            <Sep className="ml-[3px] w-[13px]" /><span>IDES</span><Sep className="w-[13px]" /><span>INS</span><Sep className="w-[13px]" />
            <Sep className="ml-[16px] w-[13px]" />
            <Ic w={16} h={14}><path d="M1 0v7M3 3.500h12M6 1L3 3.500 6 6M15 7v7M1 10.500h12M10 8l3 2.500-3 2.500" stroke="#a5a5a5" /></Ic>
            <Sep className="ml-[7px] w-[13px]" />
            <Ic w={16} h={17}><path d="M8 6V3.500C8 .5 14.500.5 14.500 3.500V6" stroke="#444" strokeWidth="2.200" /><path d="M.7 8h11.500v8H.7z" fill="#7fb4d8" stroke="#0f5f8c" strokeWidth="1.300" /></Ic>
          </div>
        </footer>
      </div>
      <div className="absolute inset-x-[13px] bottom-0 h-[11px] rounded-t-[11px] border-t border-[#27509c] bg-linear-to-b from-[#6b93de] via-[#2f56a8] via-35% to-[#0c1f4c]" />
      <div className="absolute top-0 right-[13px] flex h-[30px] w-[112px] gap-[3px] pt-[7px] pl-[11px] drop-shadow-[0_2px_2px_rgba(0,0,0,0.4)]">
        <svg width="112" height="30" viewBox="0 0 112 30" fill="none" className="absolute inset-0">
          <defs><linearGradient id="tabg" x1="0" y1="0" x2="0" y2="1"><stop offset="0" stopColor="#5c86dd" /><stop offset=".35" stopColor="#3a62b8" /><stop offset="1" stopColor="#234487" /></linearGradient></defs>
          <path d="M-4 .5h116V3c-8 0-12 0-17 5L78 25c-3 3-6 4-10 4H6c-4 0-5-1-5-4V6C1 3 0 2-4 .5z" fill="url(#tabg)" stroke="#101d40" />
        </svg>
        {[
          ['Minimize', <path d="M2 9h8v2H2z" fill="#a9c6fb" />],
          ['Maximize', <><path d="M1.500 2.500h9v8h-9z" stroke="#a9c6fb" strokeWidth="1.300" /><path d="M1 1h10v3H1z" fill="#a9c6fb" /></>],
          ['Close', <path d="M2 2l8 8M10 2l-8 8" stroke="#a9c6fb" strokeWidth="2.400" />],
        ].map(([l, d]) => (
          <button key={l} aria-label={l} className="relative flex size-4 items-center justify-center rounded-[2px] border border-[#1c3874]"><Ic w={12} h={12}>{d}</Ic></button>
        ))}
      </div>
      <Dialog />
      <div role="tooltip" className="absolute top-[782px] right-[339px] z-50 flex h-[26px] w-[85px] border border-[#a5b8d0] bg-white px-0.5 leading-[22px] whitespace-pre">Copy   (Enter)</div>
      <Ic w={18} h={18} className="absolute right-1 bottom-1.5"><path d="M2 17L15 2M7 17l9-10M12 17l4-5" stroke="#a9adb2" /></Ic>
    </section>
  );
}

/* ---------- taskbar ---------- */

function Taskbar() {
  return (
    <footer className="flex h-10 shrink-0 justify-between bg-[#010307] text-white">
      <div className="flex">
        <button aria-label="시작" className="flex w-12 items-center justify-center"><Ic><path d="M0 2.300l6.800-1v6.200H0zM7.700 1.200L16 0v7.500H7.700zM0 8.400h6.800v6.200L0 13.700zM7.700 8.400H16V16l-8.300-1.200z" fill="#fff" /></Ic></button>
        <button aria-label="검색" className="flex w-12 items-center justify-center"><Ic w={17} h={17}><circle cx="10.500" cy="6.500" r="5.300" stroke="#fff" strokeWidth="1.300" /><path d="M6.500 10.500L1 16" stroke="#fff" strokeWidth="1.400" /></Ic></button>
        <button aria-label="작업 보기" className="flex w-12 items-center justify-center"><Ic w={20} h={16}><path d="M4.500 1.500h11v13h-11zM2.500 3.500h-2v9h2M17.500 3.500h2v9h-2" stroke="#fff" strokeWidth="1.300" /></Ic></button>
        <div className="ml-[3px] flex gap-px">
          <button aria-label="메모장" className="flex w-12 flex-col items-center justify-between pt-2"><NoteIcon s={24} /><span className="h-0.5 w-10 bg-[#fbdd8a]" /></button>
          <button aria-label="SAP Logon" className="flex w-12 flex-col items-center justify-between bg-[#333438] pt-3.5">
            <Ic w={24} h={12}><path d="M1 0h23l-8 11.500H1l4-4H1V4h6z" fill="#3c78b0" /><path d="M1 4h14l-4 4.500H1z" fill="#fbb911" /></Ic>
            <span className="h-0.5 w-full bg-[#fbdd8a]" />
          </button>
          <button aria-label="KakaoTalk" className="flex w-12 flex-col items-center justify-between pt-2">
            <Ic w={24} h={24}><path d="M0 0h24v24H0z" fill="#fbe300" /><ellipse cx="12" cy="11.500" rx="9.500" ry="7.800" fill="#371d1e" /><path d="M6 16v5.500l5-3.500z" fill="#371d1e" /><text x="12" y="14" textAnchor="middle" fontFamily="Liberation Sans" fontWeight="bold" fontSize="6" fill="#fbe300">TALK</text></Ic>
            <span className="h-0.5 w-10 bg-[#fbdd8a]" />
          </button>
          <button aria-label="Zoom" className="flex w-12 flex-col items-center justify-between pt-2"><CamIcon s={23} /><span className="h-0.5 w-10 bg-[#fbdd8a]" /></button>
        </div>
      </div>
      <div className="flex w-[35%] items-center justify-end rounded-bl-lg bg-linear-to-b from-[#262626] from-35% via-[#14171c] via-45% to-[#010307] to-70%">
        <button aria-label="숨겨진 아이콘" className="flex w-6 justify-center"><Ic w={12} h={8}><path d="M1 7l5-5.500L11 7" stroke="#fff" strokeWidth="1.300" /></Ic></button>
        <span className="flex w-6 justify-center"><Ic><path d="M3.500 12.500a3 3 0 010-6C4.500 3 10 2.500 11.500 6 15 6 16 9 15 12.500z" fill="#777" /><path d="M1 1.500l14 14" stroke="#ddd" strokeWidth="1.300" /></Ic></span>
        <span className="flex w-6 justify-center"><Ic><path d="M8 0l7 2v5c0 4-3 7-7 9C4 14 1 11 1 7V2z" fill="#fff" /><path d="M8 0v16M1 7h14" stroke="#14171c" /><path d="M11.500 7.500L16 16H7z" fill="#fcc419" /><path d="M11.500 10.500v3M11.500 14.200v1" stroke="#222" strokeWidth="1.200" /></Ic></span>
        <span className="flex w-6 justify-center"><Ic w={17}><path d="M5 2.500h11v8.500H6M10.500 11v4M7 15h7M1 1h4v4H1zM3 5v9h4" stroke="#fff" strokeWidth="1.200" /></Ic></span>
        <span className="flex w-6 justify-center"><Ic w={17}><path d="M1 6h2l4-4v11L3 9.500H1z" stroke="#fff" strokeWidth="1.200" /><circle cx="12" cy="11" r="4.500" fill="#e0202c" /><path d="M10.200 9.200l3.600 3.600M13.800 9.200l-3.600 3.600" stroke="#fff" strokeWidth="1.200" /></Ic></span>
        <span className="flex w-6 justify-center font-['Noto_Sans',sans-serif] text-[19px] leading-6">A</span>
        <div className="w-[76px] pb-0.5 text-center text-[13px] leading-[18px]"><p>오전 10:18</p><p>2022-03-12</p></div>
        <button aria-label="알림" className="flex w-11 justify-center pt-1 pl-1.5"><Ic w={24} h={26}>
          <path d="M1 1h15v12H9l-4 4v-4H1z" fill="#fff" /><path d="M3.500 4.500h10M3.500 7h10M3.500 9.500h10" stroke="#14171c" />
          <circle cx="16" cy="17" r="7.500" fill="#23262b" stroke="#8a8d92" /><text x="16" y="21.500" textAnchor="middle" fontFamily="Liberation Sans" fontWeight="bold" fontSize="12" fill="#fff">2</text>
        </Ic></button>
        <span className="mr-1 ml-1.5 h-full w-px bg-[#555]" />
      </div>
    </footer>
  );
}

export default function App() {
  return (
    <div className={`relative flex h-screen w-full flex-col overflow-hidden bg-[#1a1a1a] ${KR}`}>
      <MeetingTitle />
      <div className="flex-1 bg-[#1a1a1a]"><Gallery /></div>
      <MeetingTools />
      <Taskbar />
      <PdfWindow />
      <Notepad />
      <SapWindow />
      <div role="tooltip" className="absolute bottom-[108px] left-[15px] border border-[#333] bg-[#232323] pt-3 pr-5 pb-[21px] pl-[15px] text-[14px] leading-5 text-white shadow-[0_2px_8px_rgba(0,0,0,0.5)]">
        오디오에 연결하려면 클릭
        <Ic w={18} h={9} className="absolute top-full left-[22px]"><path d="M0 0h18L9 8z" fill="#232323" /></Ic>
      </div>
      <div className="pointer-events-none absolute right-[80px] bottom-[90px] z-50 w-[334px] whitespace-nowrap text-[#8c8c8c]/70">
        <p className="text-[21px] leading-7">Windows 정품 인증</p>
        <p className="text-[16px] leading-5">[설정]으로 이동하여 Windows를 정품 인증합니다.</p>
      </div>
    </div>
  );
}
